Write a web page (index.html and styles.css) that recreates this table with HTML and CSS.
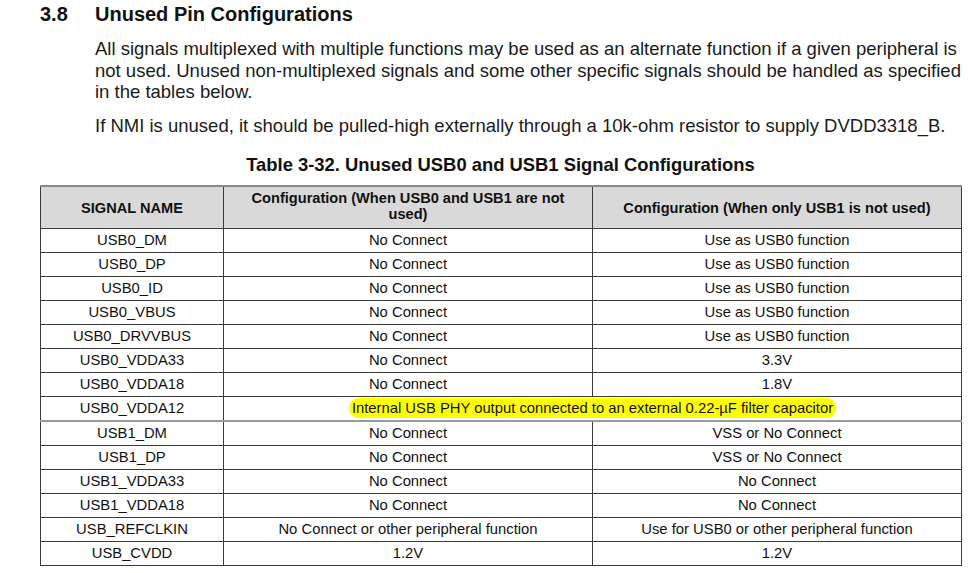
FILE: index.html
```html
<!DOCTYPE html>
<html>
<head>
<meta charset="utf-8">
<link rel="stylesheet" href="styles.css">
</head>
<body>
<div class="page">
  <h2 class="heading"><span class="num">3.8</span><span class="title">Unused Pin Configurations</span></h2>
  <p class="para">All signals multiplexed with multiple functions may be used as an alternate function if a given peripheral is<br>not used. Unused non-multiplexed signals and some other specific signals should be handled as specified<br>in the tables below.</p>
  <p class="para para2">If NMI is unused, it should be pulled-high externally through a 10k-ohm resistor to supply DVDD3318_B.</p>
  <div class="caption">Table 3-32. Unused USB0 and USB1 Signal Configurations</div>
  <table class="tbl">
    <colgroup>
      <col class="w1">
      <col class="w2">
      <col class="w3">
    </colgroup>
    <thead>
      <tr>
        <th>SIGNAL NAME</th>
        <th class="c2">Configuration (When USB0 and USB1 are not<br>used)</th>
        <th>Configuration (When only USB1 is not used)</th>
      </tr>
    </thead>
    <tbody>
      <tr><td>USB0_DM</td><td>No Connect</td><td>Use as USB0 function</td></tr>
      <tr><td>USB0_DP</td><td>No Connect</td><td>Use as USB0 function</td></tr>
      <tr><td>USB0_ID</td><td>No Connect</td><td>Use as USB0 function</td></tr>
      <tr><td>USB0_VBUS</td><td>No Connect</td><td>Use as USB0 function</td></tr>
      <tr><td>USB0_DRVVBUS</td><td>No Connect</td><td>Use as USB0 function</td></tr>
      <tr><td>USB0_VDDA33</td><td>No Connect</td><td>3.3V</td></tr>
      <tr><td>USB0_VDDA18</td><td>No Connect</td><td>1.8V</td></tr>
      <tr class="hl-row"><td>USB0_VDDA12</td><td colspan="2"><span class="hl">Internal USB PHY output connected to an external 0.22-µF filter capacitor</span></td></tr>
      <tr><td>USB1_DM</td><td>No Connect</td><td>VSS or No Connect</td></tr>
      <tr><td>USB1_DP</td><td>No Connect</td><td>VSS or No Connect</td></tr>
      <tr><td>USB1_VDDA33</td><td>No Connect</td><td>No Connect</td></tr>
      <tr><td>USB1_VDDA18</td><td>No Connect</td><td>No Connect</td></tr>
      <tr><td>USB_REFCLKIN</td><td>No Connect or other peripheral function</td><td>Use for USB0 or other peripheral function</td></tr>
      <tr><td>USB_CVDD</td><td>1.2V</td><td>1.2V</td></tr>
    </tbody>
  </table>
</div>
</body>
</html>
```
FILE: styles.css
```css
html, body {
  margin: 0;
  padding: 0;
  background: #ffffff;
}
body {
  font-family: "Liberation Sans", Arial, sans-serif;
  color: #111;
}
.page {
  padding: 2px 0 0 40px;
}
.heading {
  margin: 0;
  font-size: 20px;
  font-weight: bold;
  line-height: 24px;
  display: flex;
}
.num {
  width: 55px;
}
.para {
  margin: 12px 0 0 55px;
  font-size: 18.5px;
  line-height: 21.5px;
  white-space: nowrap;
  color: #1a1a1a;
}
.para2 {
  margin-top: 12px;
}
.caption {
  width: 921px;
  text-align: center;
  font-weight: bold;
  font-size: 18.4px;
  line-height: 20px;
  margin-top: 19px;
}
.tbl {
  margin-top: 10px;
  border-collapse: collapse;
  width: 922px;
  table-layout: fixed;
  font-size: 14.8px;
}
.w1 { width: 183px; }
.w2 { width: 369px; }
.w3 { width: 369px; }
.tbl th {
  background: #d9d9d9;
  font-size: 14.6px;
  font-weight: bold;
  line-height: 16px;
  height: 38px;
  padding: 0;
  border: 1px solid #3a3a3a;
  border-top: 2px solid #8a8a8a;
  text-align: center;
  vertical-align: middle;
}
.tbl th.c2 { vertical-align: top; padding-top: 3px; }
.tbl td {
  border: 1px solid #3a3a3a;
  text-align: center;
  height: 23px;
  padding: 0;
  line-height: 17px;
  vertical-align: middle;
}
.tbl tr.hl-row td {
  border-bottom: 2px solid #9a9a9a;
}
.hl {
  background: #ffff00;
  border-radius: 9px;
  padding: 2px 3px;
}
```
